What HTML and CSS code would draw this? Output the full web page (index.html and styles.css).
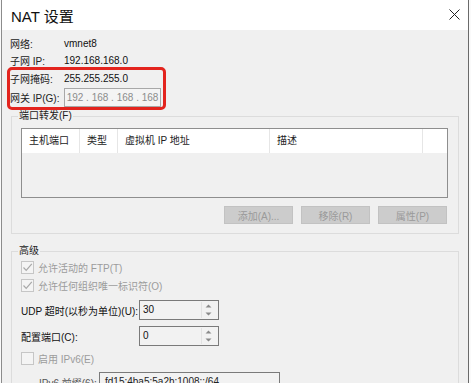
FILE: index.html
```html
<!DOCTYPE html>
<html>
<head>
    <title>NAT 设置</title>
    <link rel="stylesheet" href="styles.css">
</head>
<body>
    <div class="dialog">
        <div class="titlebar">
            <span class="title">NAT 设置</span>
            <svg class="close" width="11" height="11" viewBox="0 0 11 11">
                <path d="M0.5 0.5 L10.5 10.5 M10.5 0.5 L0.5 10.5" stroke="#222" stroke-width="1" fill="none"/>
            </svg>
        </div>

        <div class="content">
            <div class="info-row"><span class="label">网络:</span><span class="value">vmnet8</span></div>
            <div class="info-row"><span class="label">子网 IP:</span><span class="value">192.168.168.0</span></div>

            <div class="marked">
                <div class="info-row"><span class="label">子网掩码:</span><span class="value">255.255.255.0</span></div>
                <div class="info-row gateway">
                    <span class="label">网关 IP(G):</span>
                    <span class="ip-box">192 . 168 . 168 . 168</span>
                </div>
            </div>

            <fieldset class="group forward">
                <legend>端口转发(F)</legend>
                <div class="list">
                    <div class="list-head">
                        <span class="col c1">主机端口</span>
                        <span class="col c2">类型</span>
                        <span class="col c3">虚拟机 IP 地址</span>
                        <span class="col c4">描述</span>
                        <span class="col c5"></span>
                    </div>
                </div>
                <div class="buttons">
                    <button class="button">添加(A)...</button>
                    <button class="button">移除(R)</button>
                    <button class="button">属性(P)</button>
                </div>
            </fieldset>

            <fieldset class="group advanced">
                <legend>高级</legend>
                <div class="check-row disabled">
                    <span class="box checked">
                        <svg width="11" height="11" viewBox="0 0 11 11"><path d="M1.5 5.5 L4.2 8.3 L9.8 1.8" stroke="#a8a8a8" stroke-width="1.2" fill="none"/></svg>
                    </span>
                    允许活动的 FTP(T)
                </div>
                <div class="check-row disabled">
                    <span class="box checked">
                        <svg width="11" height="11" viewBox="0 0 11 11"><path d="M1.5 5.5 L4.2 8.3 L9.8 1.8" stroke="#a8a8a8" stroke-width="1.2" fill="none"/></svg>
                    </span>
                    允许任何组织唯一标识符(O)
                </div>
                <div class="field-row udp">
                    <span class="field-label">UDP 超时(以秒为单位)(U):</span>
                    <span class="spin"><span class="spin-value">30</span><span class="spin-arrows">
                        <svg width="7" height="14" viewBox="0 0 7 14"><path d="M0.5 4.5 L3.5 1.5 L6.5 4.5 Z M0.5 9.5 L3.5 12.5 L6.5 9.5 Z" fill="#8a8a8a"/></svg>
                    </span></span>
                </div>
                <div class="field-row config">
                    <span class="field-label">配置端口(C):</span>
                    <span class="spin"><span class="spin-value">0</span><span class="spin-arrows">
                        <svg width="7" height="14" viewBox="0 0 7 14"><path d="M0.5 4.5 L3.5 1.5 L6.5 4.5 Z M0.5 9.5 L3.5 12.5 L6.5 9.5 Z" fill="#8a8a8a"/></svg>
                    </span></span>
                </div>
                <div class="check-row disabled ipv6">
                    <span class="box"></span>
                    启用 IPv6(E)
                </div>
                <div class="field-row prefix">
                    <span class="field-label prefix-label">IPv6 前缀(6):</span>
                    <span class="prefix-box">fd15:4ba5:5a2h:1008::/64</span>
                </div>
            </fieldset>
        </div>
    </div>
</body>
</html>
```

FILE: styles.css
```css
body {
    margin: 0;
    padding: 0;
    background-color: #fafafa;
    font-family: "Liberation Sans", "Noto Sans CJK SC", sans-serif;
    font-size: 10px;
    color: #1a1a1a;
    overflow: hidden;
}

.dialog {
    margin-left: 1px;
    width: 466px;
    height: 383px;
    background-color: #f0f0f0;
    border-left: 1px solid #8c8c8c;
    border-right: 1px solid #6a6a6a;
    overflow: hidden;
}

.titlebar {
    height: 30px;
    background-color: #fff;
    display: flex;
    align-items: center;
    justify-content: space-between;
    padding: 0 8px 0 9px;
}

.title {
    font-family: "Liberation Sans", "Noto Sans CJK SC", sans-serif;
    font-size: 15px;
    color: #111;
}

.close {
    margin-top: -1px;
}

.content {
    padding: 5px 5px 0 8px;
}

.info-row {
    display: flex;
    align-items: center;
    height: 17px;
    white-space: nowrap;
}

.label {
    width: 54px;
    flex: none;
    color: #222;
}

.value {
    color: #111;
}

.marked {
    width: 153px;
    margin-top: 1px;
    border-radius: 2px;
    outline: 3px solid #e3241e;
    outline-offset: 0;
}

.gateway {
    height: 19px;
    margin-top: 1px;
}

.ip-box {
    width: 95px;
    height: 17px;
    border: 1px solid #a8a8a8;
    background-color: #f4f4f4;
    color: #8c8c8c;
    line-height: 17px;
    text-align: center;
}

.group {
    margin: 2px 0 0 1px;
    width: 448px;
    border: 1px solid #dcdcdc;
    padding: 5px 10px 9px 9px;
    box-sizing: border-box;
}

.group legend {
    padding: 0 1px;
    margin-left: -3px;
    line-height: 14px;
    color: #222;
}

.list {
    height: 70px;
    border: 1px solid #8e8e8e;
    box-sizing: border-box;
    background-color: #f0f0f0;
}

.list-head {
    display: flex;
    height: 24px;
    background-color: #fff;
}

.col {
    height: 24px;
    line-height: 24px;
    padding-left: 7px;
    border-right: 1px solid #e6e6e6;
    box-sizing: border-box;
    color: #222;
    white-space: nowrap;
}

.c1 { width: 58px; }
.c2 { width: 38px; }
.c3 { width: 152px; }
.c4 { width: 153px; }
.c5 { flex: 1; border-right: none; }

.buttons {
    display: flex;
    justify-content: flex-end;
    gap: 8px;
    margin-top: 8px;
    padding-right: 1px;
}

.button {
    width: 69px;
    height: 18px;
    padding: 0;
    background-color: #cccccc;
    border: 1px solid #c2c2c2;
    color: #9a9a9a;
    font-family: "Liberation Sans", "Noto Sans CJK SC", sans-serif;
    font-size: 10px;
}

.advanced {
    margin-top: 10px;
    height: 160px;
    padding-top: 0;
}

.check-row {
    display: flex;
    align-items: center;
    height: 18px;
    gap: 4px;
    white-space: nowrap;
}

.disabled {
    color: #9c9c9c;
}

.box {
    width: 11px;
    height: 11px;
    border: 1px solid #c6c6c6;
    background-color: #f4f4f4;
    display: flex;
    align-items: center;
    justify-content: center;
}

.field-row {
    display: flex;
    align-items: center;
    height: 20px;
    white-space: nowrap;
}

.udp {
    margin-top: 6px;
}

.config {
    margin-top: 6px;
}

.field-label {
    width: 118px;
    flex: none;
    color: #111;
}

.spin {
    display: flex;
    width: 80px;
    height: 20px;
    border: 1px solid #7a7a7a;
    box-sizing: border-box;
    background-color: #f2f2f2;
}

.spin-value {
    flex: 1;
    padding-left: 3px;
    line-height: 17px;
    color: #111;
}

.spin-arrows {
    width: 13px;
    display: flex;
    align-items: center;
    justify-content: center;
    border-left: 1px solid #e2e2e2;
    margin: 1px 3px 1px 0;
}

.ipv6 {
    margin-top: 3px;
}

.prefix {
    margin-top: 5px;
}

.prefix-label {
    width: 60px;
    padding-left: 18px;
    color: #555;
}

.prefix-box {
    width: 181px;
    height: 20px;
    border: 1px solid #7a7a7a;
    box-sizing: border-box;
    background-color: #f2f2f2;
    padding-left: 5px;
    line-height: 17px;
    color: #222;
}
```
